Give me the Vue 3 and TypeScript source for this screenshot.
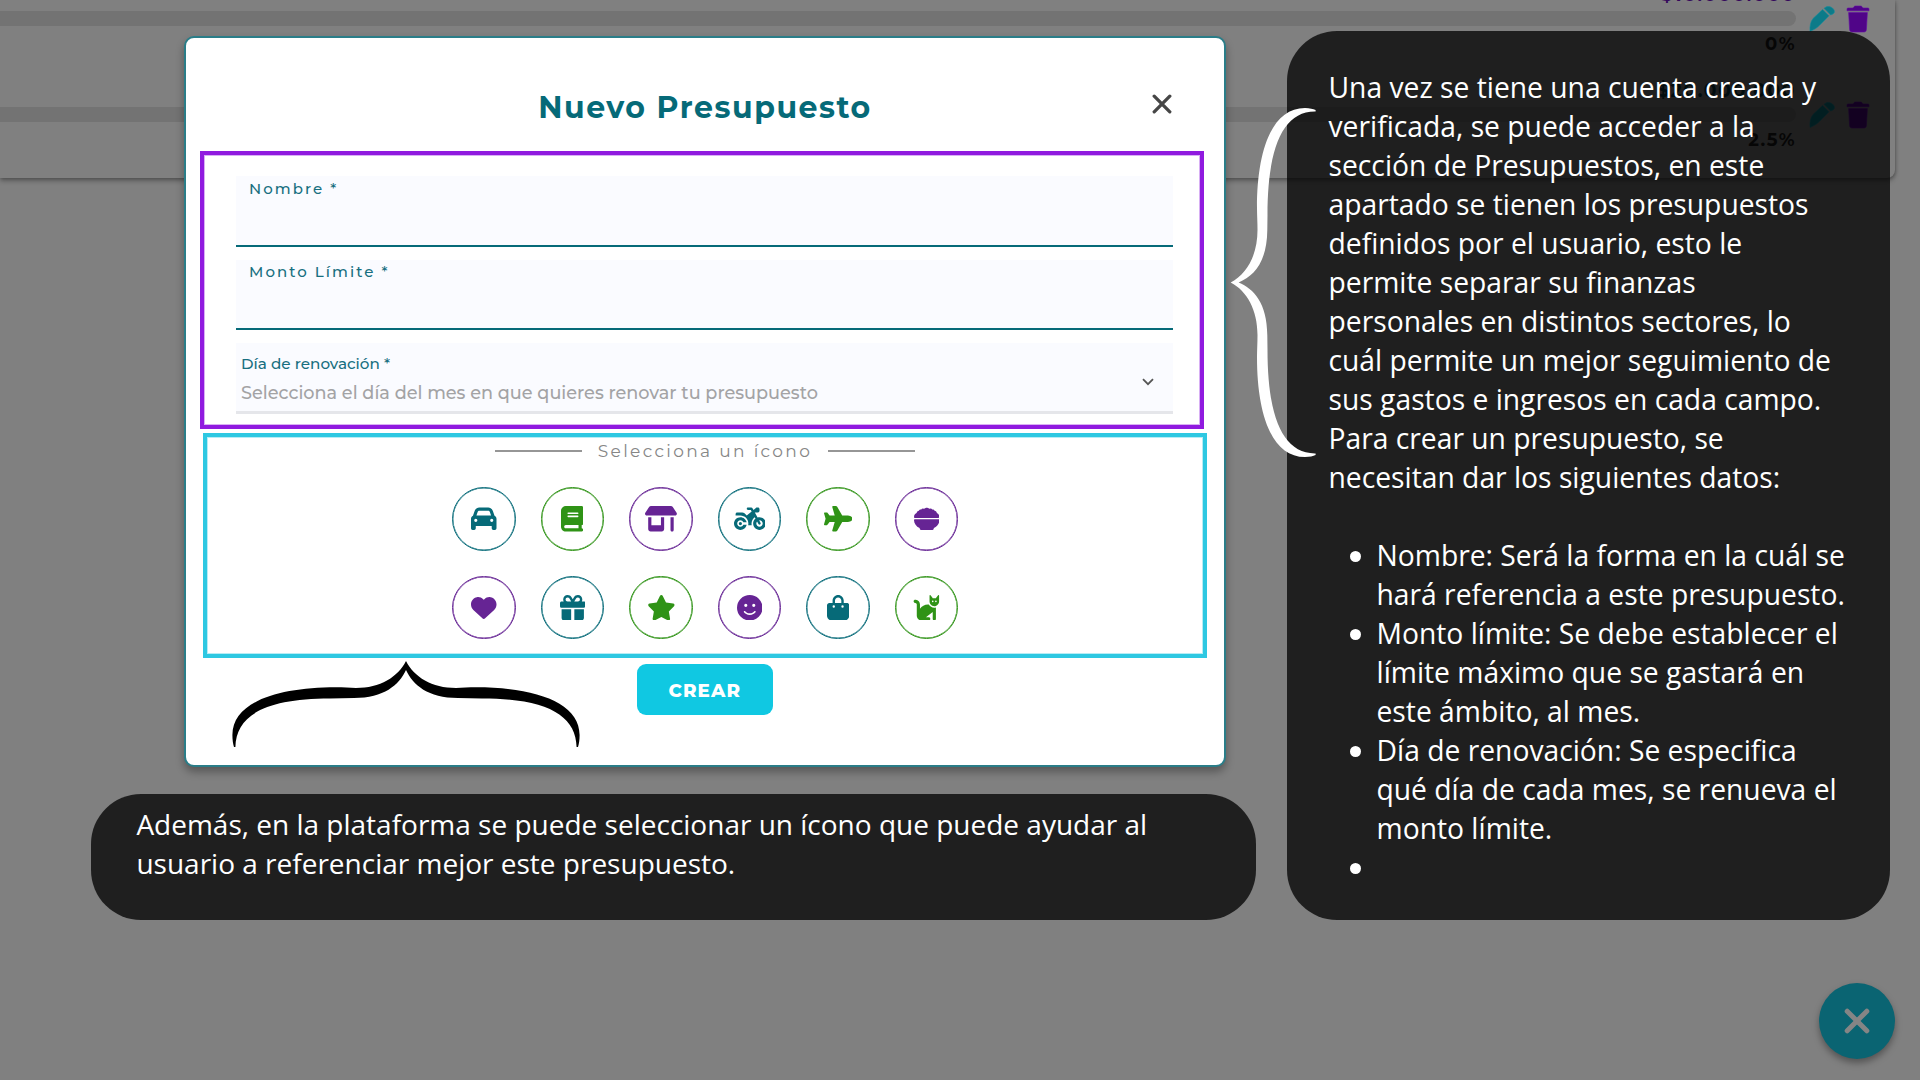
<script setup lang="ts">
interface IconShape {
  name: string
  box: string
  width: number
  tone: 'teal' | 'green' | 'purple'
  d: string
}

interface Budget {
  amount: string
  percent: string
  tone: 'violet' | 'teal'
}

const budgets: Budget[] = [
  { amount: '$10.000.000', percent: '0%', tone: 'violet' },
  { amount: '$20.000.000', percent: '2.5%', tone: 'teal' },
]

const icons: IconShape[] = [
  { name: 'car', box: '0 0 512 512', width: 25.5, tone: 'teal', d: 'M135.2 117.4L109.1 192H402.9l-26.1-74.6C372.3 104.6 360.2 96 346.6 96H165.4c-13.6 0-25.7 8.6-30.2 21.4zM39.6 196.8L74.8 96.3C88.3 57.8 124.6 32 165.4 32H346.6c40.8 0 77.1 25.8 90.6 64.3l35.2 100.5c23.2 9.6 39.6 32.5 39.6 59.2V400v48c0 17.7-14.3 32-32 32H448c-17.7 0-32-14.3-32-32V400H96v48c0 17.7-14.3 32-32 32H32c-17.7 0-32-14.3-32-32V400 256c0-26.7 16.4-49.6 39.6-59.2zM128 288a32 32 0 1 0 -64 0 32 32 0 1 0 64 0zm288 32a32 32 0 1 0 0-64 32 32 0 1 0 0 64z' },
  { name: 'book', box: '0 0 448 512', width: 22.3, tone: 'green', d: 'M96 0C43 0 0 43 0 96V416c0 53 43 96 96 96H384h32c17.7 0 32-14.3 32-32s-14.3-32-32-32V384c17.7 0 32-14.3 32-32V32c0-17.7-14.3-32-32-32H384 96zm0 384H352v64H96c-17.7 0-32-14.3-32-32s14.3-32 32-32zm32-240c0-8.8 7.2-16 16-16H336c8.8 0 16 7.2 16 16s-7.2 16-16 16H144c-8.8 0-16-7.2-16-16zm16 48H336c8.8 0 16 7.2 16 16s-7.2 16-16 16H144c-8.8 0-16-7.2-16-16s7.2-16 16-16z' },
  { name: 'shop', box: '0 0 640 512', width: 31.9, tone: 'purple', d: 'M36.8 192H603.2c20.3 0 36.8-16.5 36.8-36.8c0-7.3-2.2-14.4-6.2-20.4L558.2 21.4C549.3 8 534.4 0 518.3 0H121.7c-16 0-31 8-39.9 21.4L6.2 134.7c-4 6.1-6.2 13.2-6.2 20.4C0 175.5 16.5 192 36.8 192zM64 224V384v80c0 26.5 21.5 48 48 48H336c26.5 0 48-21.5 48-48V384 224H320V384H128V224H64zm448 0V480c0 17.7 14.3 32 32 32s32-14.3 32-32V224H512z' },
  { name: 'motorcycle', box: '0 0 640 512', width: 31.9, tone: 'teal', d: 'M280 32c-13.3 0-24 10.7-24 24s10.7 24 24 24h57.7l16.4 30.3L256 192l-45.3-45.3c-12-12-28.3-18.7-45.3-18.7H64c-17.7 0-32 14.3-32 32v32h96c88.4 0 160 71.6 160 160c0 11-1.1 21.7-3.2 32h70.4c-2.1-10.3-3.2-21-3.2-32c0-52.2 25-98.6 63.7-127.8l15.4 28.6C402.4 276.3 384 312 384 352c0 70.7 57.3 128 128 128s128-57.3 128-128s-57.3-128-128-128c-13.5 0-26.5 2.1-38.7 6L418.2 128H480c17.7 0 32-14.3 32-32V64c0-17.7-14.3-32-32-32H459.6c-7.5 0-14.7 2.6-20.5 7.4L391.7 78.9l-14-26c-7-12.9-20.5-21-35.2-21H280zM462.7 311.2l28.2 52.2c6.3 11.7 20.9 16 32.5 9.7s16-20.9 9.7-32.5l-28.2-52.2c2.3-.3 4.7-.4 7.1-.4c35.3 0 64 28.7 64 64s-28.7 64-64 64s-64-28.7-64-64c0-15.5 5.5-29.7 14.7-40.8zM187.3 376c-9.5 23.5-32.5 40-59.3 40c-35.3 0-64-28.7-64-64s28.7-64 64-64c26.9 0 49.9 16.5 59.3 40h66.4C242.5 268.8 190.5 224 128 224C57.3 224 0 281.3 0 352s57.3 128 128 128c62.5 0 114.5-44.8 125.8-104H187.3zM128 384a32 32 0 1 0 0-64 32 32 0 1 0 0 64z' },
  { name: 'plane', box: '0 0 576 512', width: 28.7, tone: 'green', d: 'M482.3 192c34.2 0 93.7 29 93.7 64c0 36-59.5 64-93.7 64l-116.6 0L265.2 495.9c-5.7 10-16.3 16.1-27.8 16.1l-56.2 0c-10.6 0-18.3-10.2-15.4-20.4l49-171.6L112 320 68.8 377.6c-3 4-7.8 6.4-12.8 6.4l-42 0c-7.8 0-14-6.3-14-14c0-1.3 .2-2.6 .5-3.9L32 256 .5 145.9c-.4-1.3-.5-2.6-.5-3.9c0-7.8 6.3-14 14-14l42 0c5 0 9.8 2.4 12.8 6.4L112 192l102.9 0-49-171.6C162.9 10.2 170.6 0 181.2 0l56.2 0c11.5 0 22.1 6.2 27.8 16.1L365.7 192l116.6 0z' },
  { name: 'bowl', box: '0 0 512 512', width: 25.5, tone: 'purple', d: 'M22 240C8 240 0 231 0 219C2 174 30 150 53 142C54 116 75 97 98 94C105 76 126 66 146 70C154 55 174 50 191 54C207 60 207 58 216 47C228 29 284 29 296 47C305 58 309 58 321 54C338 50 358 55 366 70C386 66 407 76 414 94C437 97 458 116 459 142C482 150 510 174 512 219C512 231 504 240 490 240ZM0 284C0 273 9 264 20 264H492C503 264 512 273 512 284C508 353 468 408 400 442L394 462C391 473 382 480 370 480H142C130 480 121 473 118 462L112 442C44 408 4 353 0 284Z' },
  { name: 'heart', box: '0 0 512 512', width: 25.5, tone: 'purple', d: 'M47.6 300.4L228.3 469.1c7.5 7 17.4 10.9 27.7 10.9s20.2-3.9 27.7-10.9L464.4 300.4c30.4-28.3 47.6-68 47.6-109.5v-5.8c0-69.9-50.5-129.5-119.4-141C347 36.5 300.6 51.4 268 84L256 96 244 84c-32.6-32.6-79-47.5-124.6-39.9C50.5 55.6 0 115.2 0 185.1v5.8c0 41.5 17.2 81.2 47.6 109.5z' },
  { name: 'gift', box: '0 0 512 512', width: 25.5, tone: 'teal', d: 'M190.5 68.8L225.3 128H224 152c-22.1 0-40-17.9-40-40s17.9-40 40-40h2.2c14.9 0 28.8 7.9 36.3 20.8zM64 88c0 14.4 3.5 28 9.6 40H32c-17.7 0-32 14.3-32 32v64c0 17.7 14.3 32 32 32H480c17.7 0 32-14.3 32-32V160c0-17.7-14.3-32-32-32H438.4c6.1-12 9.6-25.6 9.6-40c0-48.6-39.4-88-88-88h-2.2c-31.9 0-61.5 16.9-77.7 44.4L256 85.5l-24.1-41C215.7 16.9 186.1 0 154.2 0H152C103.4 0 64 39.4 64 88zm336 0c0 22.1-17.9 40-40 40H288h-1.3l34.8-59.2C329.1 55.9 342.9 48 357.8 48H360c22.1 0 40 17.9 40 40zM32 288V464c0 26.5 21.5 48 48 48H224V288H32zM288 512H432c26.5 0 48-21.5 48-48V288H288V512z' },
  { name: 'star', box: '0 0 576 512', width: 28.7, tone: 'green', d: 'M316.9 18C311.6 7 300.4 0 288.1 0s-23.4 7-28.8 18L195 150.3 51.4 171.5c-12 1.8-22 10.2-25.7 21.7s-.7 24.2 7.9 32.7L137.8 329 113.2 474.7c-2 12 3 24.2 12.9 31.3s23 8 33.8 2.3l128.3-68.5 128.3 68.5c10.8 5.7 23.9 4.9 33.8-2.3s14.9-19.3 12.9-31.3L438.5 329 542.7 225.9c8.6-8.5 11.7-21.2 7.9-32.7s-13.7-19.9-25.7-21.7L381.2 150.3 316.9 18z' },
  { name: 'smile', box: '0 0 512 512', width: 25.5, tone: 'purple', d: 'M256 512A256 256 0 1 0 256 0a256 256 0 1 0 0 512zM164.1 325.5C182 346.2 212.6 368 256 368s74-21.8 91.9-42.5c5.8-6.7 15.9-7.4 22.6-1.6s7.4 15.9 1.6 22.6C349.8 372.1 311.1 400 256 400s-93.8-27.9-116.1-53.5c-5.8-6.7-5.1-16.8 1.6-22.6s16.8-5.1 22.6 1.6zM144.4 208a32 32 0 1 1 64 0 32 32 0 1 1 -64 0zm192-32a32 32 0 1 1 0 64 32 32 0 1 1 0-64z' },
  { name: 'bag', box: '0 0 448 512', width: 22.3, tone: 'teal', d: 'M160 112c0-35.3 28.7-64 64-64s64 28.7 64 64v48H160V112zm-48 48H48c-26.5 0-48 21.5-48 48V416c0 53 43 96 96 96H352c53 0 96-43 96-96V208c0-26.5-21.5-48-48-48H336V112C336 50.1 285.9 0 224 0S112 50.1 112 112v48zm24 48a24 24 0 1 1 0 48 24 24 0 1 1 0-48zm152 24a24 24 0 1 1 48 0 24 24 0 1 1 -48 0z' },
  { name: 'cat', box: '0 0 576 512', width: 28.7, tone: 'green', d: 'M320 192h17.1c22.1 38.3 63.5 64 110.9 64c11 0 21.8-1.4 32-4v4 32V480c0 17.7-14.3 32-32 32s-32-14.3-32-32V339.2L280 448h56c17.7 0 32 14.3 32 32s-14.3 32-32 32H192c-53 0-96-43-96-96V192.5c0-16.1-12-29.8-28-31.8l-7.9-1c-17.5-2.2-30-18.2-27.8-35.7s18.2-30 35.7-27.8l7.9 1c48 6 84.1 46.8 84.1 95.3v85.3c34.4-51.7 93.2-85.8 160-85.8zm160 26.5v0c-10 3.5-20.8 5.5-32 5.5c-28.4 0-54-12.4-71.6-32h0c-3.7-4.1-7-8.5-9.9-13.2C357.3 164 352 146.6 352 128v0V32 12 10.7C352 4.8 356.7 .1 362.6 0h.2c3.3 0 6.4 1.6 8.4 4.2l0 .1L384 21.3l27.2 36.3L416 64h64l4.8-6.4L512 21.3 524.8 4.3l0-.1c2-2.6 5.1-4.2 8.4-4.2h.2C539.3 .1 544 4.8 544 10.7V12 32v96c0 17.3-4.6 33.6-12.6 47.6c-11.3 19.8-29.6 35.2-51.4 42.9zM432 128a16 16 0 1 0 -32 0 16 16 0 1 0 32 0zm48 16a16 16 0 1 0 0-32 16 16 0 1 0 0 32z' },
]

const intro: string[] = [
  'Una vez se tiene una cuenta creada y',
  'verificada, se puede acceder a la',
  'sección de Presupuestos, en este',
  'apartado se tienen los presupuestos',
  'definidos por el usuario, esto le',
  'permite separar su finanzas',
  'personales en distintos sectores, lo',
  'cuál permite un mejor seguimiento de',
  'sus gastos e ingresos en cada campo.',
  'Para crear un presupuesto, se',
  'necesitan dar los siguientes datos:',
]

const points: string[][] = [
  ['Nombre: Será la forma en la cuál se', 'hará referencia a este presupuesto.'],
  ['Monto límite: Se debe establecer el', 'límite máximo que se gastará en', 'este ámbito, al mes.'],
  ['Día de renovación: Se especifica', 'qué día de cada mes, se renueva el', 'monto límite.'],
  ['\u00a0'],
]
</script>

<template>
  <div class="scene">
    <section class="budget-card">
      <div v-for="b in budgets" :key="b.amount" class="budget">
        <div class="budget-main">
          <div class="amount" :class="b.tone">{{ b.amount }}</div>
          <div class="track"></div>
          <div class="percent">{{ b.percent }}</div>
        </div>
        <div class="budget-actions">
          <svg class="pencil" viewBox="0 0 26 26">
            <path d="M1 25.4C0.6 20 1.6 15.6 4 12.6L13.6 3.4L20 9.8L10.3 19.5C8 21.8 5 23.8 1 25.4Z" />
            <path d="M15 2.3L17 1C19.6 -0.4 25.6 1.6 25.4 6C25.3 7.4 23.6 8.2 21.6 9Z" />
          </svg>
          <svg class="trash" viewBox="0 0 22 26">
            <path d="M0 4.8V3C0 2.2 0.5 2 1.2 2H6L7.2 0.5C7.5 0.1 8 0 8.4 0H13.6C14 0 14.5 0.1 14.8 0.5L16 2H20.8C21.5 2 22 2.2 22 3V4.8Z" />
            <path d="M1.6 6.6H20.4L19.4 23.6C19.3 25.2 18.5 26 17 26H5C3.5 26 2.7 25.2 2.6 23.6Z" />
          </svg>
        </div>
      </div>
    </section>

    <button class="fab" type="button" aria-label="Cerrar">
      <svg viewBox="0 0 26 26"><path d="M3.2 3.2L22.8 22.8M22.8 3.2L3.2 22.8" /></svg>
    </button>

    <div class="modal">
      <header class="modal-head">
        <h1>Nuevo Presupuesto</h1>
        <svg class="close" viewBox="0 0 20 20"><path d="M2.2 2.2L17.8 17.8M17.8 2.2L2.2 17.8" /></svg>
      </header>

      <div class="form-frame">
        <div class="field"><label class="spaced">Nombre *</label></div>
        <div class="field"><label class="spaced">Monto Límite *</label></div>
        <div class="field select">
          <div class="select-text">
            <label>Día de renovación *</label>
            <span class="placeholder">Selecciona el día del mes en que quieres renovar tu presupuesto</span>
          </div>
          <svg class="chevron" viewBox="0 0 12 8"><path d="M1 1.2L6 6.2L11 1.2" /></svg>
        </div>
      </div>

      <div class="icon-frame">
        <div class="divider"><i></i><span>Selecciona un ícono</span><i></i></div>
        <div class="icon-grid">
          <div v-for="icon in icons" :key="icon.name" class="icon" :class="icon.tone">
            <svg :viewBox="icon.box" :width="icon.width" height="25.5"><path :d="icon.d" /></svg>
          </div>
        </div>
      </div>

      <button class="create" type="button">CREAR</button>
    </div>

    <aside class="note side-note">
      <p><span v-for="line in intro" :key="line" class="line">{{ line }}</span></p>
      <ul>
        <li v-for="(point, i) in points" :key="i">
          <span v-for="line in point" :key="line" class="line">{{ line }}</span>
        </li>
      </ul>
    </aside>

    <aside class="note bottom-note">
      <p>
        <span class="line">Además, en la plataforma se puede seleccionar un ícono que puede ayudar al</span>
        <span class="line">usuario a referenciar mejor este presupuesto.</span>
      </p>
    </aside>

    <svg class="braces" viewBox="0 0 1920 1080">
      <path
        fill="#fff"
        d="M1230.7 282.5C1247 274 1257.5 255 1257.5 230C1257.5 222 1257 215 1257 208C1257 150 1272 108 1305 108C1310 108 1313 109 1315.6 110V111.6C1282 111 1267.5 150 1267.5 215L1267.3 230C1267 262 1254 276 1238.6 282.5C1254 289 1267 303 1267.3 335L1267.5 350C1267.5 415 1282 454 1315.6 453.4V455C1313 456 1310 457 1305 457C1272 457 1257 415 1257 357C1257 350 1257.5 343 1257.5 335C1257.5 310 1247 291 1230.7 282.5Z"
      />
      <path
        fill="#000"
        d="M406 661C398 677 380 688 356 688C350 688 343 687.3 336 687.3C278 687.3 232.4 702 232.4 735C232.4 740 233 744 234 747H235.4C236 715 266 698.5 330 698.5L354 698C384 698 399 685 406 670C413 685 428 698 458 698L482 698.5C546 698.5 576 715 576.6 747H578C579 744 579.6 740 579.6 735C579.6 702 534 687.3 476 687.3C469 687.3 462 688 456 688C432 688 414 677 406 661Z"
      />
    </svg>
  </div>
</template>

<style>
html,
body {
  margin: 0;
  overflow: hidden;
  background: #808080;
}
</style>

<style scoped>
.scene {
  position: relative;
  width: 1920px;
  height: 1080px;
  overflow: hidden;
  background: #808080;
  font-family: Montserrat, Inter, sans-serif;
}

.scene * {
  box-sizing: border-box;
}

/* Budget list behind the dialog */
.budget-card {
  width: 1895px;
  height: 177.5px;
  border-radius: 0 0 8px 0;
  background: #808080;
  box-shadow: 0 3px 5px rgba(0, 0, 0, 0.28), 1px 1px 3px rgba(0, 0, 0, 0.16);
  overflow: hidden;
}

.budget {
  display: flex;
  height: 96px;
}

.budget-main {
  width: 1796px;
  display: flex;
  flex-direction: column;
  align-items: flex-end;
  font-weight: 700;
  letter-spacing: 1.5px;
}

.amount {
  height: 29px;
  margin-top: -18px;
  padding-top: 2px;
  font-size: 19px;
  line-height: 22px;
  white-space: nowrap;
}

.amount.violet {
  color: #34085c;
}

.amount.teal {
  color: #06343b;
}

.track {
  width: 100%;
  height: 15px;
  border-radius: 0 8px 8px 0;
  background: #737373;
}

.percent {
  padding-top: 6px;
  font-size: 18px;
  line-height: 24px;
  color: #1a1a1a;
}

.budget-actions {
  display: flex;
  align-items: flex-start;
  gap: 12px;
  padding: 6px 0 0 13px;
}

.budget-actions svg {
  overflow: visible;
}

.pencil {
  width: 26px;
  height: 26px;
  fill: #0c7b89;
  stroke: #128e9d;
  stroke-width: 0.6;
}

.trash {
  width: 22px;
  height: 26px;
  fill: #500588;
  stroke: #640bA8;
  stroke-width: 0.6;
}

.fab {
  position: absolute;
  left: 1819px;
  top: 983px;
  width: 76px;
  height: 76px;
  display: grid;
  place-items: center;
  padding: 0;
  border: 0;
  border-radius: 50%;
  background: #0a6472;
  box-shadow: 0 4px 7px rgba(0, 0, 0, 0.35);
}

.fab svg {
  width: 26px;
  height: 26px;
  fill: none;
  stroke: #858585;
  stroke-width: 5;
  stroke-linecap: round;
}

/* Dialog */
.modal {
  position: absolute;
  left: 184px;
  top: 36px;
  width: 1042px;
  height: 731px;
  border: 2px solid #2a7d88;
  border-radius: 10px;
  background: #fff;
  box-shadow: 0 5px 8px rgba(0, 0, 0, 0.32);
}

.modal-head {
  display: grid;
  grid-template-columns: 1fr auto 1fr;
  height: 113px;
  padding: 50px 52px 0 52px;
}

h1 {
  grid-column: 2;
  margin: 1px 0 0;
  font-size: 30px;
  font-weight: 700;
  line-height: 38px;
  letter-spacing: 1.55px;
  color: #066a78;
  white-space: nowrap;
}

.close {
  justify-self: end;
  width: 20px;
  height: 20px;
  margin-top: 6px;
  fill: none;
  stroke: #464646;
  stroke-width: 3.3;
  stroke-linecap: round;
}

.form-frame {
  width: 1004px;
  height: 278px;
  margin-left: 14px;
  padding: 21px 27px 0 32px;
  border: 4px solid #901adf;
  box-shadow: inset 0 0 0 1px rgba(144, 26, 223, 0.35);
}

.field {
  height: 70.5px;
  margin-bottom: 13px;
  padding: 2.5px 0 0 13px;
  border-bottom: 2px solid #066a78;
  background: #fafbff;
  color: #176f80;
}

.field label {
  display: block;
  font-size: 15px;
  font-weight: 500;
  line-height: 20px;
  white-space: nowrap;
}

.field .spaced {
  letter-spacing: 2.05px;
}

.field.select {
  display: flex;
  justify-content: space-between;
  align-items: center;
  height: 71px;
  margin-bottom: 0;
  padding: 0 19px 0 5px;
  border-bottom: 3px solid #e5e6ea;
}

.field.select label {
  font-size: 15.2px;
}

.select-text {
  padding-top: 5px;
}

.placeholder {
  display: block;
  margin-top: 6px;
  font-size: 17.67px;
  font-weight: 500;
  line-height: 26px;
  color: #a3a3a5;
  white-space: nowrap;
}

.chevron {
  width: 12px;
  height: 8px;
  margin-top: 10px;
  fill: none;
  stroke: #555;
  stroke-width: 1.8;
}

.icon-frame {
  width: 1004px;
  height: 225px;
  margin: 4px 0 0 17px;
  border: 4px solid #2ec8e2;
  box-shadow: inset 0 0 0 1px rgba(46, 200, 226, 0.35);
}

.divider {
  display: flex;
  justify-content: center;
  align-items: center;
  gap: 15.5px;
  height: 26px;
  padding-top: 1px;
  color: #868686;
  font-size: 17px;
  line-height: 26px;
  letter-spacing: 2.35px;
  white-space: nowrap;
}

.divider i {
  width: 87.5px;
  height: 2px;
  background: #969696;
}

.icon-grid {
  display: grid;
  grid-template-columns: repeat(6, 63.5px);
  gap: 25.1px;
  margin: 24px 0 0 245px;
}

.icon {
  display: grid;
  place-items: center;
  height: 63.5px;
  border: 1px solid currentColor;
  border-radius: 50%;
  box-shadow: inset 0 0 0 0.4px currentColor;
}

.icon svg {
  fill: currentColor;
}

.icon.teal {
  color: #066a78;
}

.icon.green {
  color: #2f9316;
}

.icon.purple {
  color: #662494;
}

.create {
  display: block;
  width: 136.5px;
  height: 51px;
  margin: 6px 0 0 450.5px;
  padding: 1px 0 0;
  border: 0;
  border-radius: 9px;
  background: #10c8e2;
  color: #fff;
  font-family: inherit;
  font-size: 18.3px;
  font-weight: 800;
  letter-spacing: 1.1px;
}

/* Explanatory notes */
.note {
  position: absolute;
  border-radius: 50px;
  background: rgba(0, 0, 0, 0.757);
  color: #fff;
  font-family: 'Open Sans', sans-serif;
  font-size: 28px;
  line-height: 39px;
}

.note p {
  margin: 0;
}

.line {
  display: block;
  white-space: nowrap;
}

.side-note {
  left: 1286.5px;
  top: 31px;
  width: 603px;
  height: 889px;
  padding: 37px 0 0 42px;
  font-size: 28.25px;
}

.side-note ul {
  margin: 39px 0 0;
  padding: 0;
  list-style: none;
}

.side-note li {
  display: grid;
  grid-template-columns: 48px auto;
}

.side-note li::before {
  content: '';
  grid-row: 1;
  width: 11px;
  height: 11px;
  margin: 15px 0 0 21px;
  border-radius: 50%;
  background: #fff;
}

.side-note .line {
  grid-column: 2;
}

.bottom-note {
  left: 91px;
  top: 794px;
  width: 1165px;
  height: 126px;
  padding: 11px 0 0 45.4px;
}

.braces {
  position: absolute;
  inset: 0;
  width: 1920px;
  height: 1080px;
  pointer-events: none;
}
</style>
